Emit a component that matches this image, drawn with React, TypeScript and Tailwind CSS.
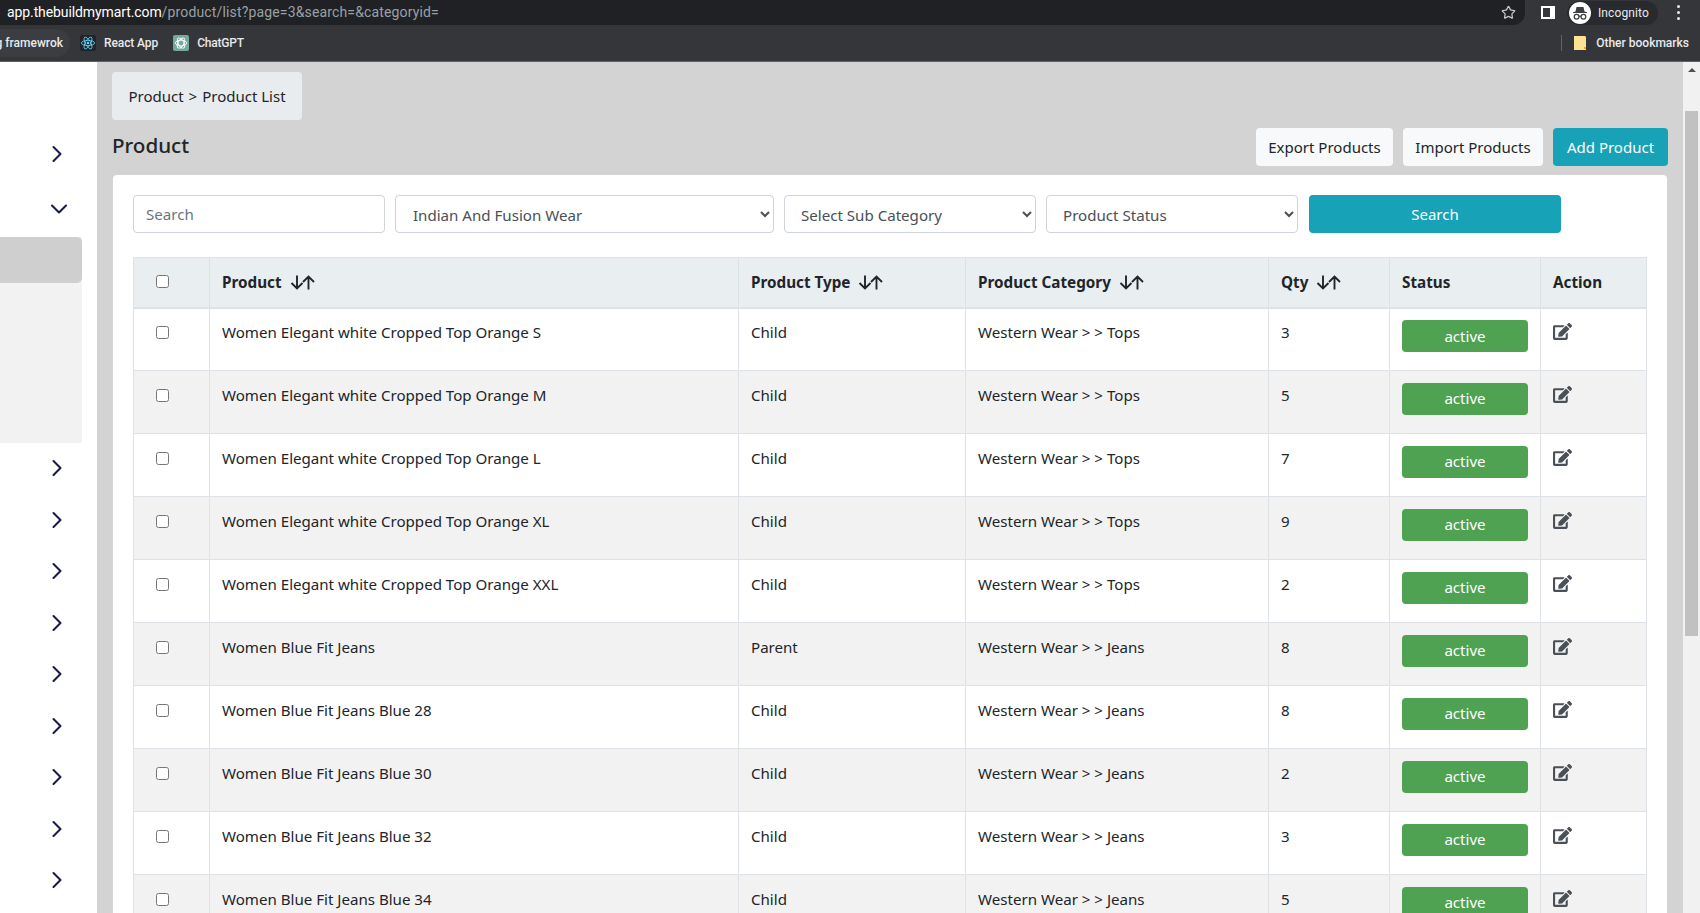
import React from "react";
import { ChevronRight, ChevronDown, Star } from "lucide-react";
import { FaEdit } from "react-icons/fa";

const rows = [
  ["Women Elegant white Cropped Top Orange S", "Child", "Tops", "3"],
  ["Women Elegant white Cropped Top Orange M", "Child", "Tops", "5"],
  ["Women Elegant white Cropped Top Orange L", "Child", "Tops", "7"],
  ["Women Elegant white Cropped Top Orange XL", "Child", "Tops", "9"],
  ["Women Elegant white Cropped Top Orange XXL", "Child", "Tops", "2"],
  ["Women Blue Fit Jeans", "Parent", "Jeans", "8"],
  ["Women Blue Fit Jeans Blue 28", "Child", "Jeans", "8"],
  ["Women Blue Fit Jeans Blue 30", "Child", "Jeans", "2"],
  ["Women Blue Fit Jeans Blue 32", "Child", "Jeans", "3"],
  ["Women Blue Fit Jeans Blue 34", "Child", "Jeans", "5"],
];

function SortArrows() {
  return (
    <svg width="25" height="15" viewBox="0 0 25 15" fill="none" stroke="#212529" strokeWidth="1.9" className="shrink-0">
      <path d="M7 0.5 V13.5 M1.5 8 L7 13.5 L12.5 8" />
      <path d="M18.5 14.5 V1.5 M13 7 L18.5 1.5 L24 7" />
    </svg>
  );
}

function SortHead({ label }: { label: string }) {
  return (
    <span className="flex items-center gap-[8px]">
      {label}
      <SortArrows />
    </span>
  );
}

function ReactLogo() {
  return (
    <svg width="16" height="16" viewBox="0 0 16 16" className="bg-[#20232a] rounded-[2px]">
      <g fill="none" stroke="#61dafb" strokeWidth="0.8">
        <ellipse cx="8" cy="8" rx="6.6" ry="2.6" />
        <ellipse cx="8" cy="8" rx="6.6" ry="2.6" transform="rotate(60 8 8)" />
        <ellipse cx="8" cy="8" rx="6.6" ry="2.6" transform="rotate(120 8 8)" />
      </g>
      <circle cx="8" cy="8" r="1.3" fill="#61dafb" />
    </svg>
  );
}

function GptLogo() {
  return (
    <svg width="16" height="16" viewBox="0 0 16 16" className="bg-[#74aa9c] rounded-[2px]">
      <g fill="none" stroke="#fff" strokeWidth="0.9">
        <ellipse cx="8" cy="8" rx="5.6" ry="2.8" />
        <ellipse cx="8" cy="8" rx="5.6" ry="2.8" transform="rotate(60 8 8)" />
        <ellipse cx="8" cy="8" rx="5.6" ry="2.8" transform="rotate(120 8 8)" />
      </g>
    </svg>
  );
}

function IncognitoIcon() {
  return (
    <svg width="22" height="22" viewBox="0 0 22 22" className="rounded-full bg-white">
      <path d="M7.5 5 L14.5 5 L15.5 9.5 L18 10.2 L18 11 L4 11 L4 10.2 L6.5 9.5 Z" fill="#3c4043" />
      <g fill="none" stroke="#3c4043" strokeWidth="1.2">
        <circle cx="7.6" cy="14.8" r="2.4" />
        <circle cx="14.4" cy="14.8" r="2.4" />
        <path d="M10 14.4 Q11 13.8 12 14.4" />
      </g>
    </svg>
  );
}

const selectCls =
  "h-[38px] bg-white border border-[#ced4da] rounded-[4px] pr-0 text-[15.1px] text-[#495057] outline-none pt-[1px]";
const thCls = "border border-[#dee2e6] border-b-2 px-[12px]";
const tdCls = "border border-[#dee2e6] align-top px-[12px] pt-[11.5px] leading-[24px]";

export default function App() {
  return (
    <div className="h-[913px] w-[1700px] overflow-hidden flex flex-col font-['Noto_Sans',sans-serif] text-[#212529]">
      {/* browser chrome */}
      <div className="h-[25px] bg-[#35363a] flex items-center">
        <div className="h-[25px] w-[1525px] bg-[#202124] rounded-br-[12px] flex items-center pl-[7px] pr-[9px] text-[14px] font-['Roboto',sans-serif]">
          <span className="text-white tracking-[-0.1px]">app.thebuildmymart.com</span>
          <span className="text-[#9aa0a6] tracking-[0.15px]">/product/list?page=3&amp;search=&amp;categoryid=</span>
          <Star size={15} className="ml-auto text-[#c8c8c8]" />
        </div>
        <div className="ml-[16px] w-[14px] h-[13px] bg-white pl-[2px] pr-[5px] py-[2px] mr-[12px]">
          <div className="w-full h-full bg-[#35363a]" />
        </div>
        <div className="h-[24px] w-[91px] rounded-full bg-[#292a2d] flex items-center gap-[7px] pl-[2px] text-[12px] text-[#e8eaed] font-['Roboto',sans-serif]">
          <IncognitoIcon />
          <span className="tracking-[0.1px]">Incognito</span>
        </div>
        <div className="ml-[19px] flex flex-col gap-[3px]">
          <div className="w-[3px] h-[3px] rounded-full bg-[#e8eaed]" />
          <div className="w-[3px] h-[3px] rounded-full bg-[#e8eaed]" />
          <div className="w-[3px] h-[3px] rounded-full bg-[#e8eaed]" />
        </div>
      </div>
      <div className="h-[37px] bg-[#35363a] border-b border-[#5f6368] flex items-center text-[12px] font-medium text-[#e8eaed] font-['Roboto',sans-serif] whitespace-nowrap">
        <div className="h-[28px] w-[70px] bg-[#3c3d41] rounded-r-full flex items-center justify-end pr-[7px] overflow-hidden">
          g framewrok
        </div>
        <div className="ml-[10px] flex items-center gap-[8px]">
          <ReactLogo />
          <span className="tracking-[-0.1px]">React App</span>
        </div>
        <div className="ml-[15px] flex items-center gap-[8px]">
          <GptLogo />
          <span className="tracking-[-0.2px]">ChatGPT</span>
        </div>
        <div className="ml-auto h-[16px] w-px bg-[#5f6368] mr-[12px]" />
        <svg width="13" height="14" viewBox="0 0 13 14" className="mr-[9px]">
          <path d="M0 0 H11 L12 1 V14 H0 Z" fill="#fde293" />
          <rect x="10" y="11" width="2" height="2" fill="#f9ab00" />
        </svg>
        <span className="mr-[11px]">Other bookmarks</span>
      </div>

      {/* page */}
      <div className="flex flex-1 min-h-0">
        <aside className="w-[97px] bg-white shrink-0">
          <div className="h-[66px]" />
          <SideChevron />
          <div className="h-[52px] flex items-center justify-end pr-[24px] pt-[7px]">
            <ChevronDown size={28} strokeWidth={1.8} className="text-[#1a1a4e]" />
          </div>
          <div className="w-[82px] h-[206px] bg-[#f2f2f2] mt-[5px]">
            <div className="h-[46px] bg-[#d0cfcf] rounded-r-[5px]" />
          </div>
          {Array.from({ length: 9 }).map((_, i) => (
            <SideChevron key={i} />
          ))}
        </aside>

        <main className="flex-1 bg-[#d3d3d3] min-w-0 pl-[15px] pr-[15px] pt-[10px]">
          <div className="w-[190px] h-[48px] bg-[#e9ecef] rounded-[4px] flex items-center justify-center text-[15px] whitespace-nowrap">
            Product <span className="mx-[5px]">&gt;</span> Product List
          </div>
          <div className="flex items-start mt-[8px]">
            <h1 className="text-[20.6px] font-medium leading-[34px] text-[#212529]">Product</h1>
            <div className="ml-auto flex gap-[10px] text-[15px]">
              <button className="h-[38px] w-[137px] bg-[#f8f9fa] rounded-[4px]">Export Products</button>
              <button className="h-[38px] w-[140px] bg-[#f8f9fa] rounded-[4px]">Import Products</button>
              <button className="h-[38px] w-[115px] bg-[#17a2b8] text-white rounded-[4px]">Add Product</button>
            </div>
          </div>

          <section className="mt-[9px] ml-[1px] mr-[1px] bg-white rounded-t-[4px] pl-[20px] pr-[20px] pt-[20px]">
            <div className="flex gap-[10px] h-[38px]">
              <input
                placeholder="Search"
                className="w-[252px] h-[38px] border border-[#ced4da] rounded-[4px] px-[12px] text-[15.1px] placeholder:text-[#6c757d] outline-none"
              />
              <select className={selectCls + " pl-[13px] w-[379px]"} defaultValue="a">
                <option value="a">Indian And Fusion Wear</option>
              </select>
              <select className={selectCls + " pl-[12px] w-[252px]"} defaultValue="a">
                <option value="a">Select Sub Category</option>
              </select>
              <select className={selectCls + " pl-[12px] w-[252px]"} defaultValue="a">
                <option value="a">Product Status</option>
              </select>
              <button className="ml-[1px] w-[252px] h-[38px] bg-[#17a2b8] text-white rounded-[4px] text-[15px]">Search</button>
            </div>

            <table className="mt-[24px] w-[1513px] table-fixed border-collapse text-[15.1px]">
              <colgroup>
                <col className="w-[76px]" />
                <col className="w-[529px]" />
                <col className="w-[227px]" />
                <col className="w-[303px]" />
                <col className="w-[121px]" />
                <col className="w-[151px]" />
                <col className="w-[106px]" />
              </colgroup>
              <thead>
                <tr className="h-[50px] bg-[#e9eef1] text-left font-bold text-[15.25px]">
                  <th className="border border-[#dee2e6] border-b-2 pl-[22px]">
                    <input type="checkbox" className="block w-[13px] h-[13px] -mt-[2px]" />
                  </th>
                  <th className={thCls}><SortHead label="Product" /></th>
                  <th className={thCls}><SortHead label="Product Type" /></th>
                  <th className={thCls}><SortHead label="Product Category" /></th>
                  <th className={thCls}><SortHead label="Qty" /></th>
                  <th className={thCls}>Status</th>
                  <th className={thCls}>Action</th>
                </tr>
              </thead>
              <tbody>
                {rows.map((r, i) => (
                  <tr key={i} className={"h-[63px] " + (i % 2 ? "bg-[#f2f2f2]" : "bg-white")}>
                    <td className="border border-[#dee2e6] align-top pl-[22px] pt-[11.5px]">
                      <input type="checkbox" className="block w-[13px] h-[13px] mt-[6px]" />
                    </td>
                    <td className={tdCls}>{r[0]}</td>
                    <td className={tdCls}>{r[1]}</td>
                    <td className={tdCls}>Western Wear &gt; &gt; {r[2]}</td>
                    <td className={tdCls}>{r[3]}</td>
                    <td className="border border-[#dee2e6] align-top px-[12px] pt-[11.5px]">
                      <div className="h-[32px] w-[126px] bg-[#4fa252] text-white rounded-[4px] flex items-center justify-center text-[15.1px]">
                        active
                      </div>
                    </td>
                    <td className="border border-[#dee2e6] align-top px-[12px] pt-[13.5px]">
                      <FaEdit size={19} className="text-[#495057]" />
                    </td>
                  </tr>
                ))}
              </tbody>
            </table>
          </section>
        </main>

        <div className="w-[17px] shrink-0 bg-[#f1f1f1] flex flex-col items-center">
          <div className="mt-[6px] w-0 h-0 border-x-[4px] border-x-transparent border-b-[4px] border-b-[#505050]" />
          <div className="mt-[39px] w-[13px] h-[525px] bg-[#c1c1c1]" />
        </div>
      </div>
    </div>
  );
}

function SideChevron() {
  return (
    <div className="h-[51.5px] flex items-center justify-end pr-[26px]">
      <ChevronRight size={28} strokeWidth={1.8} className="text-[#1a1a4e]" />
    </div>
  );
}
